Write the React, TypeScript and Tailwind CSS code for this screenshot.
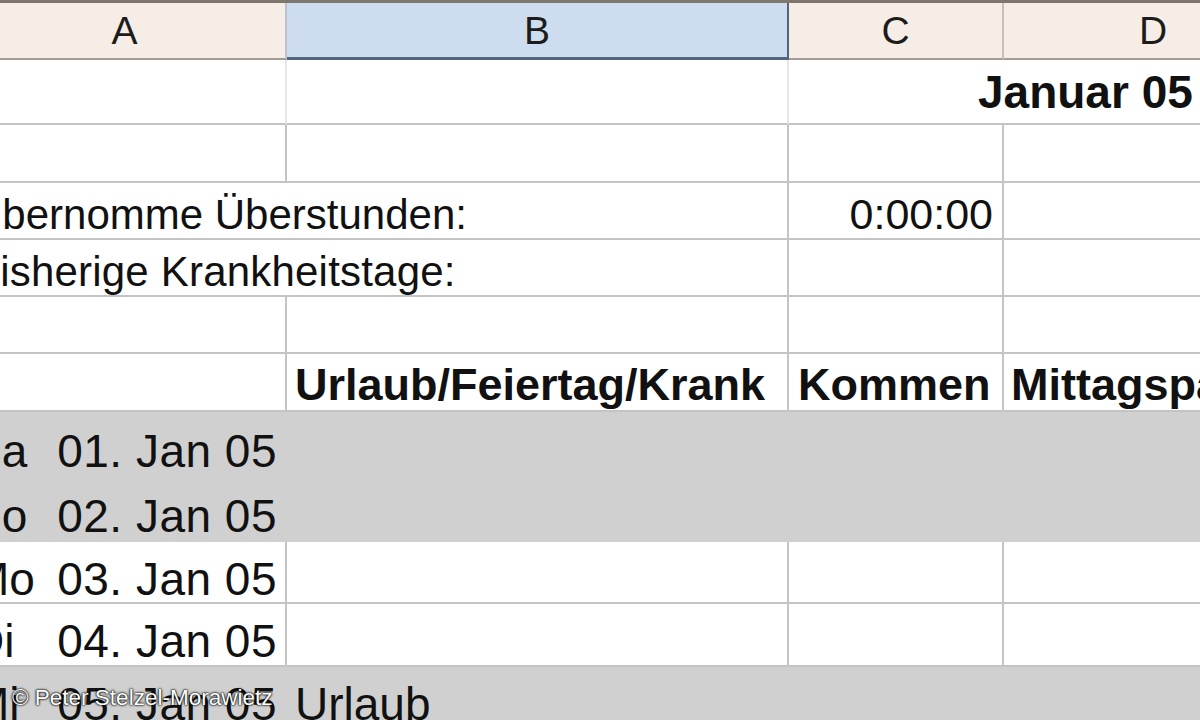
import React from 'react';

type CellProps = {
  className?: string;
  children?: React.ReactNode;
};

// one grid cell; every caller passes its own width, border and alignment
const Cell: React.FC<CellProps> = ({ className = '', children }) => (
  <div className={`flex shrink-0 items-end overflow-visible whitespace-nowrap leading-none ${className}`}>{children}</div>
);

const DayRow: React.FC<{ day: string; date: string; gray?: boolean; h: string; pb: string; note?: string }> = ({
  day,
  date,
  gray,
  h,
  pb,
  note,
}) => {
  const line = gray ? 'border-[#d0d0d0]' : 'border-[#c4c4c4]';
  return (
    <div className={`flex ${h} ${gray ? 'bg-[#d0d0d0]' : 'bg-white'} text-[46px]`}>
      <Cell className={`-ml-[36px] w-[323px] justify-between border-r-2 border-b-2 pl-[7px] pr-[8px] ${line} ${pb}`}>
        <span>{day}</span>
        <span className="tracking-[0.5px]">{date}</span>
      </Cell>
      <Cell className={`w-[502px] border-r-2 border-b-2 pl-[8px] ${line} ${pb}`}>{note}</Cell>
      <Cell className={`w-[215px] border-r-2 border-b-2 ${line} ${pb}`} />
      <Cell className={`w-[300px] border-r-2 border-b-2 ${line} ${pb}`} />
    </div>
  );
};

export default function App() {
  return (
    <div className="relative h-[720px] w-[1200px] overflow-hidden bg-white font-['Liberation_Sans',Arial,sans-serif] text-[#111]">
      {/* column headers */}
      <div className="flex h-[60px] border-t-[3px] border-[#7f776f] text-[39px] text-[#1c1c1c]">
        <div className="-ml-[36px] flex w-[323px] shrink-0 items-center justify-center border-r-2 border-b-2 border-r-[#b9c2cd] border-b-[#a29c95] bg-[#f6eee6] leading-none">
          A
        </div>
        <div className="flex w-[502px] shrink-0 items-center justify-center border-r-2 border-b-[3px] border-[#53657d] bg-[#cddcef] leading-none">
          B
        </div>
        <div className="flex w-[215px] shrink-0 items-center justify-center border-r-2 border-b-2 border-r-[#c8c0b6] border-b-[#a29c95] bg-[#f6eee6] leading-none">
          C
        </div>
        <div className="flex w-[300px] shrink-0 items-center justify-center border-r-2 border-b-2 border-r-[#c8c0b6] border-b-[#a29c95] bg-[#f6eee6] leading-none">
          D
        </div>
      </div>

      {/* month title */}
      <div className="flex h-[65px] text-[46px] font-bold">
        <Cell className="-ml-[36px] w-[323px] border-r-2 border-b-2 border-r-[#e6e6e6] border-b-[#c4c4c4]" />
        <Cell className="w-[502px] border-r-2 border-b-2 border-r-[#e6e6e6] border-b-[#c4c4c4]" />
        <Cell className="w-[515px] border-b-2 border-[#c4c4c4] pb-[8px] pl-[189px]">Januar 05</Cell>
      </div>

      {/* empty row */}
      <div className="flex h-[58px]">
        <Cell className="-ml-[36px] w-[323px] border-r-2 border-b-2 border-[#c4c4c4]" />
        <Cell className="w-[502px] border-r-2 border-b-2 border-[#c4c4c4]" />
        <Cell className="w-[215px] border-r-2 border-b-2 border-[#c4c4c4]" />
        <Cell className="w-[300px] border-r-2 border-b-2 border-[#c4c4c4]" />
      </div>

      {/* carried-over values */}
      <div className="flex h-[57px] text-[42px]">
        <Cell className="-ml-[36px] w-[825px] border-r-2 border-b-2 border-[#c4c4c4] pb-[2px] pl-[8px]">
          Übernomme Überstunden:
        </Cell>
        <Cell className="w-[215px] justify-end border-r-2 border-b-2 border-[#c4c4c4] pb-[2px] pr-[9px] text-[43px]">0:00:00</Cell>
        <Cell className="w-[300px] border-r-2 border-b-2 border-[#c4c4c4]" />
      </div>
      <div className="flex h-[57px] text-[42px]">
        <Cell className="-ml-[36px] w-[825px] border-r-2 border-b-2 border-[#c4c4c4] pb-[2px] pl-[8px] tracking-[0.2px]">
          Bisherige Krankheitstage:
        </Cell>
        <Cell className="w-[215px] border-r-2 border-b-2 border-[#c4c4c4]" />
        <Cell className="w-[300px] border-r-2 border-b-2 border-[#c4c4c4]" />
      </div>

      <div className="flex h-[57px]">
        <Cell className="-ml-[36px] w-[323px] border-r-2 border-b-2 border-[#c4c4c4]" />
        <Cell className="w-[502px] border-r-2 border-b-2 border-[#c4c4c4]" />
        <Cell className="w-[215px] border-r-2 border-b-2 border-[#c4c4c4]" />
        <Cell className="w-[300px] border-r-2 border-b-2 border-[#c4c4c4]" />
      </div>

      {/* table heading */}
      <div className="flex h-[58px] text-[45px] font-bold">
        <Cell className="-ml-[36px] w-[323px] border-r-2 border-b-2 border-[#c4c4c4]" />
        <Cell className="w-[502px] border-r-2 border-b-2 border-[#c4c4c4] pb-[3px] pl-[8px]">Urlaub/Feiertag/Krank</Cell>
        <Cell className="w-[215px] border-r-2 border-b-2 border-[#c4c4c4] pb-[3px] pl-[9px]">Kommen</Cell>
        <Cell className="w-[300px] border-r-2 border-b-2 border-[#c4c4c4] pb-[3px] pl-[7px]">Mittagspause</Cell>
      </div>

      <DayRow day="Sa" date="01. Jan 05" gray h="h-[65px]" pb="pb-[1px]" />
      <DayRow day="So" date="02. Jan 05" gray h="h-[65px]" pb="pb-[1px]" />
      <DayRow day="Mo" date="03. Jan 05" h="h-[62px]" pb="pb-0" />
      <DayRow day="Di" date="04. Jan 05" h="h-[63px]" pb="pb-[1px]" />
      <DayRow day="Mi" date="05. Jan 05" gray h="h-[64px]" pb="pb-[2px]" note="Urlaub" />

      {/* photo credit */}
      <div className="absolute left-[12px] top-[687px] text-[22.5px] leading-none text-white [text-shadow:0_0_1px_#000,0_0_2px_#000,0_0_3px_rgba(0,0,0,0.8)]">
        © Peter Stelzel-Morawietz
      </div>
    </div>
  );
}
